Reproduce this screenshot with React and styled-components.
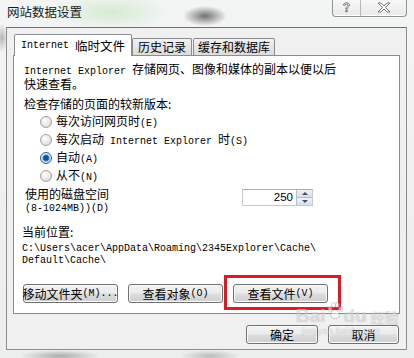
import React from "react";
import styled, { createGlobalStyle } from "styled-components";

const GlobalStyle = createGlobalStyle`
  * { box-sizing: border-box; }
  html, body { margin: 0; padding: 0; }
  body {
    font-family: "Noto Sans CJK SC", "Liberation Sans", sans-serif;
    font-size: 12px;
    color: #000;
  }
`;

const CJK = `"Noto Sans CJK SC", "Liberation Sans", sans-serif`;

const Window = styled.div`
  width: 414px;
  height: 358px;
  overflow: hidden;
  position: relative;
  display: flex;
  flex-direction: column;
  background:
    radial-gradient(ellipse 22px 10px at 205px 16px, rgba(70, 70, 70, 0.75), transparent),
    radial-gradient(ellipse 60px 18px at 110px 12px, rgba(200, 232, 196, 0.7), transparent),
    radial-gradient(ellipse 6px 14px at 2px 38px, rgba(120, 120, 120, 0.5), transparent),
    radial-gradient(ellipse 40px 6px at 60px 356px, rgba(90, 90, 90, 0.45), transparent),
    radial-gradient(ellipse 30px 6px at 210px 356px, rgba(90, 90, 90, 0.35), transparent),
    linear-gradient(#f3f4f4, #eceeee);
`;

const TitleBar = styled.div`
  height: 27px;
  flex-shrink: 0;
  display: flex;
  justify-content: space-between;
  align-items: flex-start;
  padding-left: 7px;
`;

const Title = styled.div`
  margin-top: 4px;
  font-family: ${CJK};
  font-size: 12.5px;
  line-height: 16px;
  color: #1a1a1a;
`;

const Caption = styled.div`
  display: flex;
  margin-right: 7px;
  height: 17px;
  border: 1px solid #8f9296;
  border-top: none;
  border-radius: 0 0 4px 4px;
  background: linear-gradient(#f7f7f7, #e8e9ea);
  box-shadow: inset 0 -1px 0 #ffffff;
`;

const CapBtn = styled.div`
  width: ${(p) => p.$w}px;
  height: 100%;
  display: flex;
  align-items: center;
  justify-content: center;
  padding-bottom: 2px;
  & + & {
    border-left: 1px solid #b6b8bb;
  }
`;

const Panel = styled.div`
  margin: 0 7px 0 6px;
  height: 323px;
  background: #f0f0f0;
  border: 1px solid #8d8d8d;
  border-top-color: #6e6e6e;
  padding: 6px 6px 0 6px;
  display: flex;
  flex-direction: column;
`;

const TabRow = styled.div`
  display: flex;
  align-items: flex-end;
  height: 22px;
  margin-bottom: -1px;
  padding-left: 1px;
  position: relative;
  z-index: 1;
`;

const Tab = styled.div`
  height: ${(p) => (p.$active ? 22 : 17)}px;
  margin-bottom: ${(p) => (p.$active ? 0 : 1)}px;
  margin-right: ${(p) => (p.$active ? 0 : 1)}px;
  padding: 0 ${(p) => p.$pad}px;
  border: 1px solid #898c95;
  border-bottom: none;
  border-radius: 2px 2px 0 0;
  background: ${(p) =>
    p.$active ? "#ffffff" : "linear-gradient(#f2f2f2, #e4e4e4 55%, #dcdcdc)"};
  display: flex;
  align-items: center;
  white-space: nowrap;
  font-size: ${(p) => (p.$active ? 12.5 : 12)}px;
  line-height: 14px;
`;

const Lat = styled.span`
  font-family: "Liberation Mono", "DejaVu Sans Mono", monospace;
  font-size: 10px;
`;

const TabBox = styled.div`
  height: 259px;
  background: #ffffff;
  border: 1px solid #898c95;
  padding: 7px 10px 10px 10px;
  display: flex;
  flex-direction: column;
`;

const Para = styled.div`
  line-height: 12px;
  white-space: nowrap;
  margin-left: ${(p) => p.$indent || 0}px;
  margin-top: ${(p) => p.$top || 0}px;
`;

const RadioList = styled.div`
  display: flex;
  flex-direction: column;
  margin-top: 3px;
`;

const RadioRow = styled.label`
  height: 18px;
  display: flex;
  align-items: center;
  gap: 4px;
  padding-left: 16px;
  white-space: nowrap;
  line-height: 12px;
`;

const RadioDot = styled.span`
  width: 12px;
  height: 12px;
  border-radius: 50%;
  flex-shrink: 0;
  border: 1px solid ${(p) => (p.$checked ? "#2c628b" : "#a2a2a2")};
  background: ${(p) =>
    p.$checked
      ? "radial-gradient(circle at 50% 50%, #13508f 0 2px, #3a86cf 3px, #8fc6ee 3.6px, transparent 4.2px), radial-gradient(circle at 40% 35%, #ffffff, #dcdcdc 75%, #c9c9c9)"
      : "radial-gradient(circle at 40% 35%, #ffffff, #e2e2e2 65%, #cacaca)"};
`;

const DiskRow = styled.div`
  margin-top: 3px;
  display: flex;
  align-items: flex-start;
  justify-content: space-between;
  padding-right: 76px;
`;

const DiskLabel = styled.div`
  line-height: 12px;
  margin-left: 1px;
`;

const Spin = styled.div`
  margin-top: 1px;
  width: 71px;
  height: 17px;
  display: flex;
  border: 1px solid #c5c8cc;
  border-top-color: #abadb3;
  background: #ffffff;
`;

const SpinValue = styled.div`
  flex: 1;
  text-align: right;
  padding-right: 3px;
  font-family: "Liberation Sans", sans-serif;
  font-size: 11.5px;
  line-height: 15px;
`;

const SpinBtns = styled.div`
  width: 16px;
  display: flex;
  flex-direction: column;
  border-left: 1px solid #b9bdc3;
`;

const SpinBtn = styled.div`
  flex: 1;
  display: flex;
  align-items: center;
  justify-content: center;
  background: linear-gradient(#f0f3f6, #d8dee6);
  & + & {
    border-top: 1px solid #b9bdc3;
  }
`;

const Arrow = styled.span`
  width: 0;
  height: 0;
  border-left: 3px solid transparent;
  border-right: 3px solid transparent;
  ${(p) =>
    p.$up ? "border-bottom: 3px solid #3d4f66;" : "border-top: 3px solid #3d4f66;"}
`;

const PathText = styled.div`
  margin-top: 5px;
  margin-left: -2px;
  font-family: "Liberation Mono", "DejaVu Sans Mono", monospace;
  font-size: 10px;
  line-height: 11.5px;
  white-space: nowrap;
`;

const ButtonRow = styled.div`
  margin-top: auto;
  margin-left: -1px;
  display: flex;
  gap: 10px;
`;

const Button = styled.button`
  width: ${(p) => p.$w}px;
  height: 19px;
  padding: 0;
  border: 1px solid #707070;
  border-radius: 3px;
  background: linear-gradient(#f2f2f2 0%, #ebebeb 48%, #dddddd 52%, #cfcfcf 100%);
  box-shadow: inset 0 0 0 1px #fbfbfb;
  font-family: ${CJK};
  font-size: 12px;
  line-height: 15px;
  color: #000;
  white-space: nowrap;
  display: flex;
  align-items: center;
  justify-content: center;
  overflow: visible;
`;

const Marked = styled.div`
  position: relative;
`;

const RedMark = styled.div`
  position: absolute;
  top: -9px;
  left: -9px;
  right: -13px;
  bottom: -7px;
  border: 3px solid #dc1c24;
  pointer-events: none;
`;

const DialogButtons = styled.div`
  margin-top: 11px;
  display: flex;
  justify-content: flex-end;
  gap: 10px;
  padding-right: 1px;
`;

const Watermark = styled.div`
  position: absolute;
  left: 296px;
  top: 302px;
  white-space: nowrap;
  color: rgba(255, 255, 255, 0.45);
  text-shadow: 0 0 1px rgba(90, 90, 90, 0.35);
  pointer-events: none;
`;

const WmLogo = styled.div`
  display: flex;
  align-items: flex-end;
  gap: 1px;
  font-family: "Liberation Sans", sans-serif;
  font-weight: bold;
  font-size: 19px;
  line-height: 20px;
`;

const WmCjk = styled.span`
  font-family: ${CJK};
  font-size: 14px;
  line-height: 18px;
  margin-left: 3px;
`;

const WmUrl = styled.div`
  font-family: "Liberation Sans", sans-serif;
  font-size: 8.5px;
  line-height: 10px;
  letter-spacing: 0.6px;
  padding-left: 6px;
`;

function HelpIcon() {
  return (
    <svg width="9" height="11" viewBox="0 0 9 11">
      <path
        d="M1.5 3.2 C1.5 1.4 3 0.8 4.5 0.8 C6.2 0.8 7.5 1.8 7.5 3.2 C7.5 4.8 5.2 5 5.2 6.8 L3.8 6.8 C3.8 4.6 6 4.4 6 3.2 C6 2.5 5.4 2.1 4.5 2.1 C3.6 2.1 3 2.5 3 3.2 Z M3.8 8 L5.2 8 L5.2 9.8 L3.8 9.8 Z"
        fill="#ffffff"
        stroke="#545454"
        strokeWidth="0.8"
      />
    </svg>
  );
}

function CloseIcon() {
  return (
    <svg width="14" height="11" viewBox="0 0 14 11">
      <path
        d="M1 1 L4 1 L7 4 L10 1 L13 1 L8.5 5.5 L13 10 L10 10 L7 7 L4 10 L1 10 L5.5 5.5 Z"
        fill="#ffffff"
        stroke="#5a5a5a"
        strokeWidth="0.8"
        strokeLinejoin="round"
      />
    </svg>
  );
}

function Paw() {
  return (
    <svg width="16" height="18" viewBox="0 0 16 18" style={{ marginBottom: 6 }}>
      <g fill="rgba(255,255,255,0.5)" stroke="rgba(90,90,90,0.35)" strokeWidth="0.8">
        <ellipse cx="3" cy="7" rx="2" ry="2.6" />
        <ellipse cx="6.5" cy="3" rx="2" ry="2.6" />
        <ellipse cx="10.5" cy="3" rx="2" ry="2.6" />
        <ellipse cx="13.5" cy="7" rx="2" ry="2.6" />
        <path d="M8 8 C11 8 13 12 12 15 C11 17 5 17 4 15 C3 12 5 8 8 8 Z" />
      </g>
    </svg>
  );
}

const radios = [
  { label: "每次访问网页时", key: "(E)" },
  { label: "每次启动", lat: " Internet Explorer ", tail: "时", key: "(S)" },
  { label: "自动", key: "(A)", checked: true },
  { label: "从不", key: "(N)" },
];

export default function App() {
  return (
    <>
      <GlobalStyle />
      <Window>
        <TitleBar>
          <Title>网站数据设置</Title>
          <Caption>
            <CapBtn $w={27}>
              <HelpIcon />
            </CapBtn>
            <CapBtn $w={46}>
              <CloseIcon />
            </CapBtn>
          </Caption>
        </TitleBar>

        <Panel>
          <TabRow>
            <Tab $active $pad={6}>
              <Lat>Internet&nbsp;</Lat>临时文件
            </Tab>
            <Tab $pad={5}>历史记录</Tab>
            <Tab $pad={4}>缓存和数据库</Tab>
          </TabRow>

          <TabBox>
            <Para>
              <Lat>Internet Explorer </Lat>存储网页、图像和媒体的副本以便以后
              <br />
              快速查看。
            </Para>
            <Para $top={8}>检查存储的页面的较新版本:</Para>

            <RadioList>
              {radios.map((r) => (
                <RadioRow key={r.key}>
                  <RadioDot $checked={r.checked} />
                  <span>
                    {r.label}
                    {r.lat && <Lat>{r.lat}</Lat>}
                    {r.tail}
                    <Lat>{r.key}</Lat>
                  </span>
                </RadioRow>
              ))}
            </RadioList>

            <DiskRow>
              <DiskLabel>
                使用的磁盘空间
                <br />
                <Lat>(8-1024MB))(D)</Lat>
              </DiskLabel>
              <Spin>
                <SpinValue>250</SpinValue>
                <SpinBtns>
                  <SpinBtn>
                    <Arrow $up />
                  </SpinBtn>
                  <SpinBtn>
                    <Arrow />
                  </SpinBtn>
                </SpinBtns>
              </Spin>
            </DiskRow>

            <Para $top={11} $indent={-2}>
              当前位置:
            </Para>
            <PathText>
              {"C:\\Users\\acer\\AppData\\Roaming\\2345Explorer\\Cache\\"}
              <br />
              {"Default\\Cache\\"}
            </PathText>

            <ButtonRow>
              <Button $w={95}>
                移动文件夹<Lat>(M)...</Lat>
              </Button>
              <Button $w={95}>
                查看对象<Lat>(O)</Lat>
              </Button>
              <Marked>
                <Button $w={95}>
                  查看文件<Lat>(V)</Lat>
                </Button>
                <RedMark />
              </Marked>
            </ButtonRow>
          </TabBox>

          <DialogButtons>
            <Button $w={72}>确定</Button>
            <Button $w={71}>取消</Button>
          </DialogButtons>
        </Panel>

        <Watermark>
          <WmLogo>
            <span>Bai</span>
            <Paw />
            <span>du</span>
            <WmCjk>经验</WmCjk>
          </WmLogo>
          <WmUrl>jingyan.baidu.com</WmUrl>
        </Watermark>
      </Window>
    </>
  );
}
